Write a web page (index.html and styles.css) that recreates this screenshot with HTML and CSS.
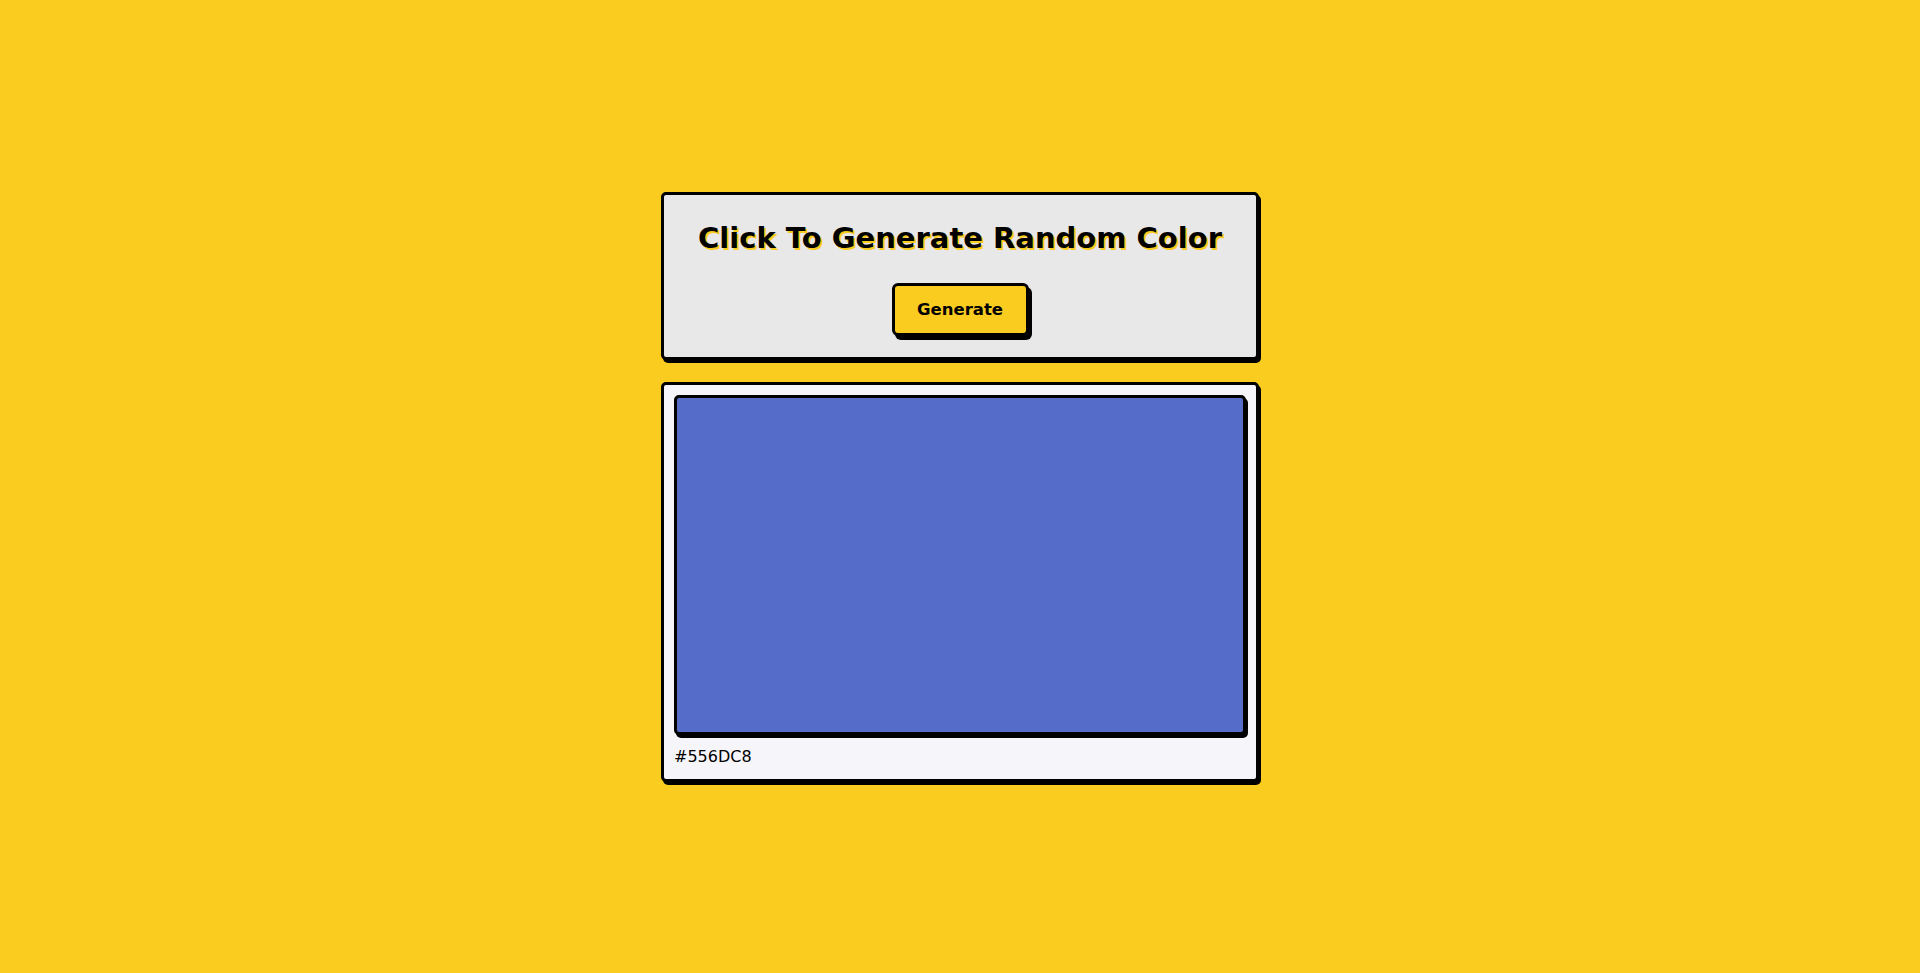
FILE: index.html
```html
<!DOCTYPE html>
<html lang="en">
<head>
<meta charset="utf-8">
<title>Random Color Generator</title>
<link rel="stylesheet" href="styles.css">
</head>
<body>
<main class="app">
  <section class="card card-top">
    <h1 class="title">Click To Generate Random Color</h1>
    <button class="btn" type="button">Generate</button>
  </section>
  <section class="card card-result">
    <div class="swatch" style="background:#556DC8"></div>
    <p class="hex">#556DC8</p>
  </section>
</main>
</body>
</html>
```
FILE: styles.css
```css
* { box-sizing: border-box; }
html, body { margin: 0; padding: 0; }
body {
  background: #FACC1F;
  font-family: "DejaVu Sans", "Open Sans", sans-serif;
  min-height: 100vh;
  display: flex;
  align-items: center;
  justify-content: center;
  color: #000;
}
.app {
  width: 598px;
  display: flex;
  flex-direction: column;
  gap: 22px;
  margin-top: 0;
}
.card {
  border: 3px solid #000;
  border-radius: 5px;
  box-shadow: 2px 3px 0 #000;
}
.card-top {
  background: #E8E8E8;
  height: 168px;
  display: flex;
  flex-direction: column;
  align-items: center;
  padding-top: 23px;
}
.title {
  margin: 0;
  font-size: 29px;
  line-height: 40px;
  font-weight: 700;
  text-shadow: 2px 2px 0 #FACC1F;
}
.btn {
  margin-top: 25px;
  width: 137px;
  height: 53px;
  background: #FACC1F;
  border: 3px solid #000;
  border-radius: 6px;
  box-shadow: 3px 4px 0 #000;
  font-family: inherit;
  font-size: 16.5px;
  font-weight: 700;
  color: #000;
  padding: 0;
}
.card-result {
  background: #F5F5FA;
  padding: 10px;
}
.swatch {
  height: 340px;
  border: 3px solid #000;
  border-radius: 5px;
  box-shadow: 2px 3px 0 #000;
}
.hex {
  margin: 9px 0 0;
  font-size: 16px;
  line-height: 25px;
}
```
